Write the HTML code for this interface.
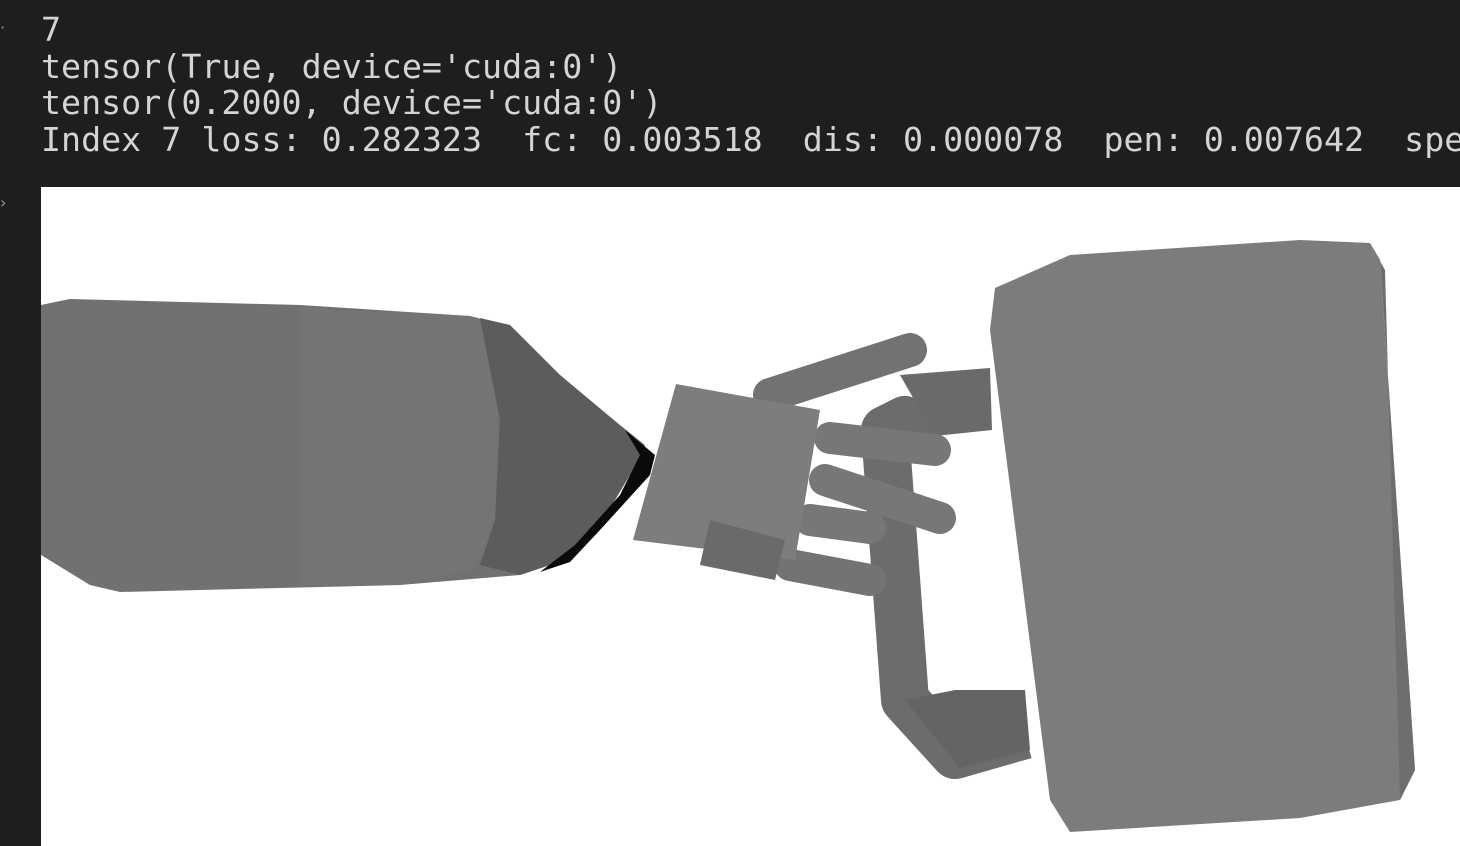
<!DOCTYPE html>
<html><head><style>
html,body{margin:0;padding:0;width:1460px;height:846px;overflow:hidden;background:#1e1e1e}
pre{position:absolute;left:41px;top:12px;margin:0;font-family:"DejaVu Sans Mono","Liberation Mono",monospace;font-size:33.3px;line-height:36.5px;color:#d4d4d4;white-space:pre}
.w{position:absolute;left:41px;top:187px;width:1419px;height:659px;background:#fff;overflow:hidden}
.m{position:absolute;left:0;color:#999;font-size:16px;font-family:"DejaVu Sans",sans-serif}
</style></head><body>
<div class="m" style="top:18px">·</div>
<div class="m" style="top:193px">›</div>
<pre>7
tensor(True, device='cuda:0')
tensor(0.2000, device='cuda:0')
Index 7 loss: 0.282323  fc: 0.003518  dis: 0.000078  pen: 0.007642  spe</pre>
<div class="w">
<svg width="1419" height="659" viewBox="41 187 1419 659" xmlns="http://www.w3.org/2000/svg">
<polygon points="41,305 70,299 300,305 470,316 505,325 560,375 620,425 645,445 600,525 565,560 520,575 400,585 120,592 90,585 41,555" fill="#717171"/>
<polygon points="300,308 470,316 500,325 495,540 470,570 400,585 300,585 300,420" fill="#747474"/>
<polygon points="480,318 510,325 560,375 625,430 645,450 600,525 565,560 520,575 480,565 495,520 500,420" fill="#5c5c5c"/>
<polygon points="625,430 655,455 650,475 600,530 570,562 540,572 575,545 620,495 640,455" fill="#0a0a0a"/>
<polyline points="935,430 905,420 885,430 905,700 955,755 1025,735" fill="none" stroke="#6c6c6c" stroke-width="48" stroke-linejoin="round"/>
<polygon points="900,375 990,368 992,430 935,436" fill="#6a6a6a"/>
<polygon points="905,700 955,690 1025,690 1030,750 960,768" fill="#646464"/>
<polygon points="995,288 1070,255 1300,240 1370,243 1380,260 1415,770 1400,800 1300,818 1070,832 1050,800 990,330" fill="#7c7c7c"/>
<polygon points="1370,243 1380,260 1415,770 1400,800 1385,270" fill="#6e6e6e"/>
<g stroke-linecap="round" fill="none">
<line x1="770" y1="395" x2="910" y2="350" stroke="#727272" stroke-width="34"/>
<line x1="830" y1="438" x2="935" y2="450" stroke="#777" stroke-width="32"/>
<line x1="825" y1="480" x2="940" y2="518" stroke="#777" stroke-width="32"/>
<line x1="810" y1="520" x2="870" y2="528" stroke="#777" stroke-width="32"/>
<line x1="790" y1="565" x2="870" y2="580" stroke="#737373" stroke-width="32"/>
</g>
<polygon points="676,384 820,410 795,560 633,540" fill="#7d7d7d"/>
<polygon points="710,520 785,540 775,580 700,565" fill="#6a6a6a"/>
</svg>
</div>
</body></html>
